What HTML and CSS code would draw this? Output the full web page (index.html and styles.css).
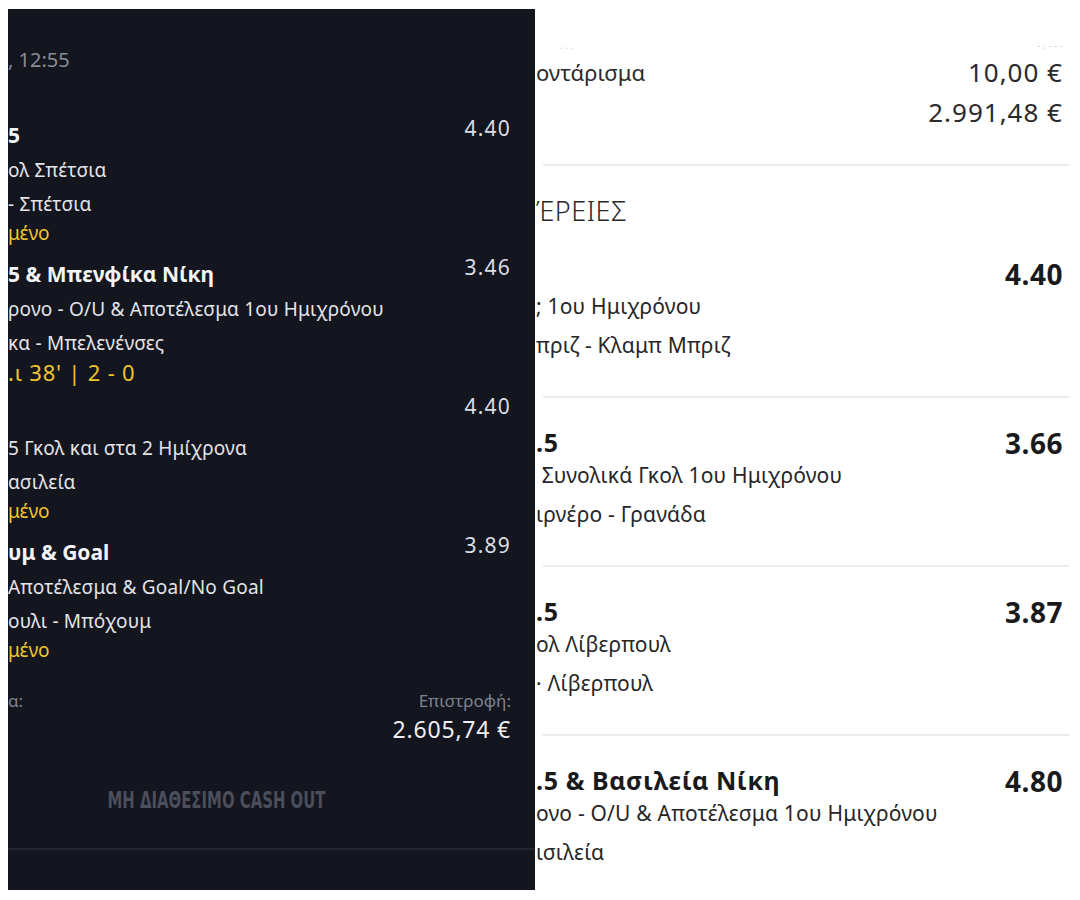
FILE: index.html
```html
<!DOCTYPE html>
<html lang="el">
<head>
<meta charset="utf-8">
<title>Στοιχήματα</title>
<link rel="stylesheet" href="styles.css">
</head>
<body>
<div class="collage">
  <section class="dark">
    <div class="time">, 12:55</div>

    <div class="bet">
      <div class="bet-head"><span class="bet-title">5</span><span class="odds">4.40</span></div>
      <div class="line">ολ Σπέτσια</div>
      <div class="line">- Σπέτσια</div>
      <div class="status">μένο</div>
    </div>

    <div class="bet">
      <div class="bet-head"><span class="bet-title">5 &amp; Μπενφίκα Νίκη</span><span class="odds">3.46</span></div>
      <div class="line">ρονο - O/U &amp; Αποτέλεσμα 1ου Ημιχρόνου</div>
      <div class="line">κα - Μπελενένσες</div>
      <div class="status live">.ι 38' | 2 - 0</div>
    </div>

    <div class="bet">
      <div class="bet-head"><span class="bet-title"></span><span class="odds">4.40</span></div>
      <div class="line">5 Γκολ και στα 2 Ημίχρονα</div>
      <div class="line">ασιλεία</div>
      <div class="status">μένο</div>
    </div>

    <div class="bet">
      <div class="bet-head"><span class="bet-title">υμ &amp; Goal</span><span class="odds">3.89</span></div>
      <div class="line">Αποτέλεσμα &amp; Goal/No Goal</div>
      <div class="line">ουλι - Μπόχουμ</div>
      <div class="status">μένο</div>
    </div>

    <div class="totals">
      <div class="tot-row"><span class="tot-label">α:</span><span class="tot-label">Επιστροφή:</span></div>
      <div class="tot-row"><span></span><span class="tot-value">2.605,74 €</span></div>
    </div>

    <div class="cashout"><span class="cashout-text">MH ΔΙΑΘΕΣΙΜΟ CASH OUT</span></div>
    <div class="dark-rule"></div>
  </section>

  <section class="light">
    <div class="faint"><span>. . .</span><span>- , - - -</span></div>
    <div class="sum-row first"><span class="sum-label">οντάρισμα</span><span class="amount">10,00 €</span></div>
    <div class="sum-row second"><span></span><span class="amount">2.991,48 €</span></div>

    <div class="rule rule-top"></div>
    <div class="section-title">ΈΡΕΙΕΣ</div>

    <div class="pick pick-first">
      <div class="pick-head"><span class="pick-title"></span><span class="pick-odds">4.40</span></div>
      <div class="pick-line">; 1ου Ημιχρόνου</div>
      <div class="pick-line second">πριζ - Κλαμπ Μπριζ</div>
    </div>
    <div class="rule"></div>

    <div class="pick">
      <div class="pick-head"><span class="pick-title">.5</span><span class="pick-odds">3.66</span></div>
      <div class="pick-line">&nbsp;Συνολικά Γκολ 1ου Ημιχρόνου</div>
      <div class="pick-line second">ιρνέρο - Γρανάδα</div>
    </div>
    <div class="rule"></div>

    <div class="pick">
      <div class="pick-head"><span class="pick-title">.5</span><span class="pick-odds">3.87</span></div>
      <div class="pick-line">ολ Λίβερπουλ</div>
      <div class="pick-line second">· Λίβερπουλ</div>
    </div>
    <div class="rule"></div>

    <div class="pick">
      <div class="pick-head"><span class="pick-title">.5 &amp; Βασιλεία Νίκη</span><span class="pick-odds">4.80</span></div>
      <div class="pick-line">ονο - O/U &amp; Αποτέλεσμα 1ου Ημιχρόνου</div>
      <div class="pick-line second">ισιλεία</div>
    </div>
  </section>
</div>
</body>
</html>
```

FILE: styles.css
```css
* { box-sizing: border-box; }
html, body { margin: 0; padding: 0; background: #ffffff; }
body {
  width: 1080px;
  height: 900px;
  overflow: hidden;
  font-family: "Noto Sans", "DejaVu Sans", sans-serif;
}
.collage {
  display: flex;
  align-items: flex-start;
  height: 900px;
}

/* ---------- dark panel ---------- */
.dark {
  margin: 9px 0 0 8px;
  width: 527px;
  height: 881px;
  background: #13151f;
  color: #eeeef0;
  overflow: hidden;
  padding: 39px 24px 0 0;
  display: flex;
  flex-direction: column;
}
.time {
  font-size: 20px;
  line-height: 24px;
  color: #8a8c96;
  margin-bottom: 43px;
}
.bet { margin-bottom: 9px; }
.bet-head {
  display: flex;
  justify-content: space-between;
  align-items: flex-start;
  margin-bottom: 5px;
}
.bet-title {
  font-size: 21px;
  font-weight: 700;
  line-height: 26px;
  min-height: 26px;
  margin-top: 7px;
  color: #f4f4f6;
}
.odds {
  font-size: 21px;
  line-height: 26px;
  letter-spacing: 1.2px;
  color: #dcdde2;
}
.line {
  font-size: 19px;
  line-height: 34px;
  letter-spacing: 0.2px;
  color: #e4e4e8;
  white-space: nowrap;
}
.status {
  font-size: 19px;
  line-height: 24px;
  color: #eec52d;
}
.status.live { font-size: 22px; letter-spacing: 0.8px; }
.totals { margin-top: 17px; }
.tot-row {
  display: flex;
  justify-content: space-between;
}
.tot-label {
  font-size: 17px;
  line-height: 26px;
  color: #80838e;
}
.tot-value {
  font-size: 23px;
  line-height: 30px;
  letter-spacing: 0.8px;
  color: #eeeef0;
}
.cashout {
  margin-top: 43px;
  width: 416px;
  text-align: center;
  line-height: 26px;
}
.cashout-text {
  display: inline-block;
  font-family: "DejaVu Sans Condensed", "DejaVu Sans", sans-serif;
  font-weight: 700;
  font-size: 23px;
  color: #4b4e5b;
  transform: scaleX(0.72);
  white-space: nowrap;
}
.dark-rule {
  margin-top: 33px;
  margin-right: -24px;
  height: 2px;
  background: #232632;
}

/* ---------- light panel ---------- */
.light {
  flex: 1;
  padding: 37px 17px 0 1px;
  color: #1e1e20;
}
.faint {
  display: flex;
  justify-content: space-between;
  font-size: 10px;
  line-height: 17px;
  color: #d6d6d6;
  padding: 0 0 0 24px;
  height: 17px;
  overflow: hidden;
}
.sum-row {
  display: flex;
  justify-content: space-between;
  color: #2a2a2c;
}
.sum-row.first { line-height: 36px; }
.sum-row.second { line-height: 44px; }
.sum-label { font-size: 22px; }
.amount { font-size: 26px; letter-spacing: 1px; }
.rule {
  height: 2px;
  background: #ececec;
  margin: 0 -6px 0 7px;
}
.rule.rule-top { margin-top: 30px; }
.section-title {
  font-size: 27px;
  font-weight: 300;
  line-height: 30px;
  color: #2a2a2c;
  margin: 30px 0 32px;
  letter-spacing: 0.5px;
}
.pick { padding: 29px 0 30px; }
.pick.pick-first { padding-top: 0; }
.pick-head {
  display: flex;
  justify-content: space-between;
  align-items: flex-start;
}
.pick-title {
  font-size: 25px;
  font-weight: 700;
  line-height: 30px;
  letter-spacing: 0.6px;
  color: #1a1a1c;
}
.pick-odds {
  font-size: 28px;
  font-weight: 700;
  line-height: 28px;
  margin-top: 2px;
  letter-spacing: 0.5px;
  color: #1a1a1c;
}
.pick-line {
  font-size: 21px;
  line-height: 36px;
  letter-spacing: 0.2px;
  color: #262628;
  white-space: nowrap;
}
.pick-line.second { line-height: 42px; }
```
